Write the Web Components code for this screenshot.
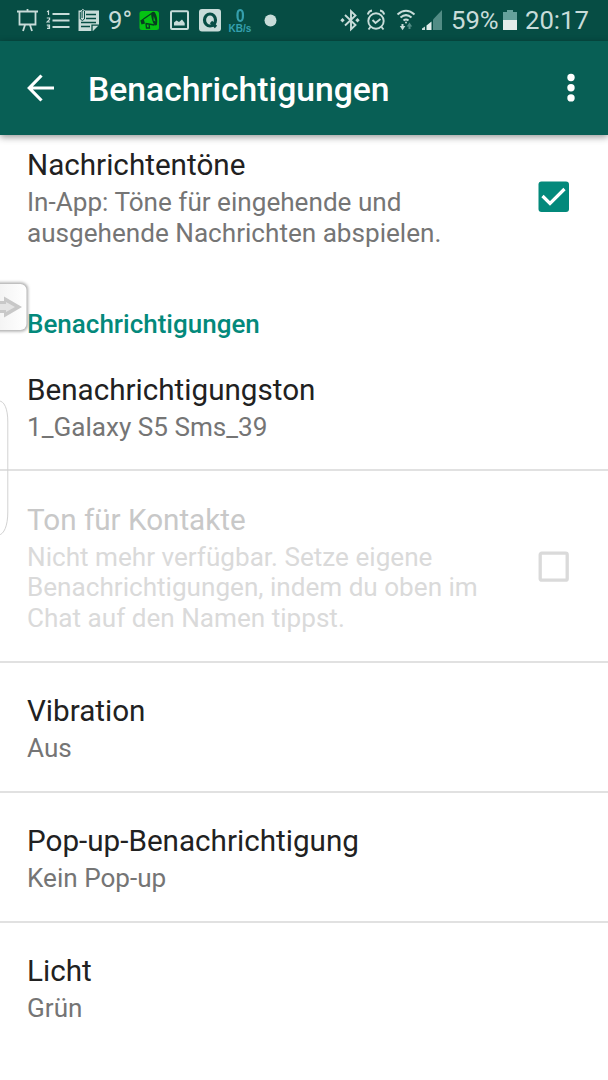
<!DOCTYPE html>
<html lang="de"><head><meta charset="utf-8"><title>Benachrichtigungen</title>
<style>html,body{margin:0;height:100%;overflow:hidden;background:#fff;font-family:Roboto,"Noto Sans",sans-serif}</style></head>
<body><settings-screen></settings-screen>
<script>
const define=(name,html)=>customElements.define(name,class extends HTMLElement{
  constructor(){super();this.attachShadow({mode:'open'}).innerHTML=html;}
});

define('status-bar',`<style>
:host{display:flex;justify-content:space-between;height:41px;background:#064d44;color:#c8dcd9;font-size:25.700px;line-height:43px}
div{display:flex;align-items:center}svg{display:block;flex:none}
span{white-space:nowrap}
.left{padding-left:16px}.right{padding-right:19px}
.rate{display:flex;flex-direction:column;justify-content:flex-start;align-items:center;width:26px;height:41px;margin-left:6px;color:#35a0ae}
.rate b{margin-top:6px;font:700 19px/19px "Liberation Sans",sans-serif;height:18px;transform:scaleX(.85)}
.rate span{font:700 10px/10px "Liberation Sans",sans-serif}
</style>
<div class="left">
<svg width="22" height="41" viewBox="16 0 22 41" fill="none" stroke="#c8dcd9" stroke-width="1.8"><path d="M17 11.500h21M19.500 12v12.500h16V12M27.500 9v3M25 25l-2 6M30 25l2 6"/></svg>
<svg style="margin-left:8px" width="24" height="41" viewBox="46 0 24 41" fill="none" stroke="#c8dcd9"><path stroke-width="2.200" d="M52.500 14h17M52.500 20.500h17M52.500 27h17"/><path stroke-width="1.200" d="M47 11.800l1.500-.8v4M46.800 18h2.800v1.500l-2.600 2.500h3M46.800 25.200h2.700v3.300h-2.500M47.500 26.800h2"/></svg>
<svg style="margin-left:8px" width="21" height="41" viewBox="78 0 21 41"><path fill="#c8dcd9" d="M78.500 10.500H99V25l-6 6H78.500z"/><path fill="none" stroke="#064d44" stroke-width="1.300" d="M86 14.500h10M86 18.500h10M81 22.500h15M81 26.500h9M92 31v-5.800h7"/><path fill="none" stroke="#064d44" stroke-width="1" d="M80.300 12v7q2 3 4.200 0v-8q-1.200-2-2.400 0v7"/><path fill="none" stroke="#c8dcd9" stroke-width="1" d="M81 11q1.500-3 3.500-.5"/></svg>
<span style="margin-left:9px;width:31px">9°</span>
<svg width="20" height="41" viewBox="139 0 20 41"><rect x="139.500" y="11" width="19.500" height="19" rx="2.500" fill="#05c313"/><path fill="#063d20" d="M151 13q2.500-2 4-.5 3 5 2 12-1 1.500-2.500.5-3-4-3.500-12z"/><path fill="none" stroke="#063d20" stroke-width="1.300" d="M151.500 13.500l-8 5.500M154.500 25l-9-1.500M146 24l.5 4h3l-.5-4"/><path fill="#063d20" d="M140.300 20.500l3.200-2 1.500 5-3.500 1z"/><path fill="#05c313" d="M153.700 16l1.800 5.500-2-1z"/></svg>
<svg style="margin-left:11px" width="19" height="41" viewBox="170 0 19 41"><rect x="171" y="11.300" width="17" height="17.800" rx="1" fill="none" stroke="#c8dcd9" stroke-width="2"/><path fill="#c8dcd9" d="M174 25.500v-3l2.500-2 2.500 1.500 3-2.500 2.700 3.500v2.500z"/></svg>
<svg style="margin-left:10px" width="22" height="41" viewBox="199 0 22 41"><rect x="199" y="9" width="22" height="22.500" rx="3" fill="#c8dcd9"/><g fill="none" stroke="#064d44" stroke-width="3.200"><ellipse cx="210" cy="20" rx="5.500" ry="6"/><path d="M211 22l5 5"/></g></svg>
<div class="rate"><b>0</b><span>KB/s</span></div>
<svg style="margin-left:11px" width="13" height="41"><circle cx="6.500" cy="20.500" r="6" fill="#c8dcd9"/></svg>
</div>
<div class="right">
<svg width="112" height="41" viewBox="338 0 112 41" fill="none" stroke="#c8dcd9" stroke-width="1.900"><path d="M345 15l10.500 10-4.500 4.200V11.300l4.500 4.200L345 25.500"/><path fill="#c8dcd9" stroke="none" d="M340.300 20.200l2.200-2.200 2.200 2.200-2.200 2.200zM355.300 20.200l2.200-2.200 2.200 2.200-2.200 2.200z"/><circle cx="376" cy="21" r="7.700"/><path d="M372.500 20l3 3 5-4M367.800 14.500q.8-3.500 4.200-4M384.200 14.500q-.8-3.500-4.200-4M370.500 27l-2 2.500M381.500 27l2 2.500"/>
<path stroke-width="2" d="M397.500 14.500q8.500-7.500 17 0M400.500 17.500q5.500-4.700 11 0M403.500 20.500q2.500-2 5 0"/><circle cx="406" cy="22.500" r="1" fill="#c8dcd9" stroke="none"/><path d="M402.500 24v3" stroke-width="2"/><path fill="#c8dcd9" stroke="none" d="M399.800 26h5.500l-2.700 4.300z"/><path stroke="#528c85" stroke-width="2" d="M409.500 25v4"/><path fill="#528c85" stroke="none" d="M406.700 26.500h5.500l-2.700-4z"/>
<path fill="#c8dcd9" stroke="none" d="M422 30v-1.500l3-2V30z"/><path fill="#e3eeec" stroke="none" d="M426.500 30v-4.500l5-4V30z"/><path fill="#528c85" stroke="none" d="M433 30V19.500L442 10v20z"/></svg>
<span style="margin-left:1px;width:46px">59%</span>
<svg style="margin-left:6px" width="14" height="41"><path fill="#67a29c" d="M0 12h4v-2h6v2h4v8H0z"/><path fill="#e5ebea" d="M0 20h14v10H0z"/></svg>
<span style="margin-left:8px;width:64px">20:17</span>
</div>`);

define('app-bar',`<style>
:host{display:flex;align-items:center;height:94px;background:#085f55;color:#fff;box-shadow:0 2px 7px rgba(0,0,0,.42);position:relative;z-index:2}
svg{display:block}.back{margin-left:27px}h1{margin:3px 0 0 34px;flex:1;font-size:33.700px;font-weight:500;line-height:40px}.more{margin-right:32px}
</style><svg class="back" width="27" height="28" viewBox="0 0 27 28" fill="none" stroke="#fff" stroke-width="3.200"><path d="M14.500 1.500L2.300 14l12.200 12.500M2.500 14H27"/></svg>
<h1><slot></slot></h1>
<svg class="more" width="10" height="30" viewBox="0 0 10 30" fill="#fff"><circle cx="5" cy="4.500" r="3.700"/><circle cx="5" cy="14.700" r="3.700"/><circle cx="5" cy="24.900" r="3.700"/></svg>`);

define('check-box',`<style>:host{display:block;width:31px;height:31px;margin:0 11px 2px 0}svg{display:block}.on{display:none}:host([checked]) .on{display:block}:host([checked]) .off{display:none}</style>
<svg class="on" width="31" height="31"><rect x=".5" y=".5" width="30.500" height="30.500" rx="3" fill="#03897b"/><path d="M4.500 15l7.500 7.500L26.500 8" fill="none" stroke="#fff" stroke-width="3.200"/></svg>
<svg class="off" width="31" height="31"><rect x="2.200" y="2.200" width="27" height="27" rx="1.500" fill="none" stroke="#dadada" stroke-width="3.300"/></svg>`);

define('setting-row',`<style>
:host{display:flex;align-items:center;box-sizing:border-box;padding:30.500px 28px 26.750px 27px;border-bottom:2px solid #e1e1e1;color:#212121}
:host([plain]){border-bottom:0}
.text{flex:1}.title{font-size:29.650px;line-height:36px;white-space:nowrap}.summary{margin-top:4px;font-size:26.120px;line-height:30.750px;color:#757575;white-space:pre-line}
:host([disabled]) .title{color:#c8c8c8}:host([disabled]) .summary{color:#dadada}
</style><div class="text"><div class="title"><slot name="title"></slot></div><div class="summary"><slot></slot></div></div><slot name="control"></slot>`);

define('section-title',`<style>:host{display:block;height:32px;padding:0 27px;color:#03897b;font-size:26px;font-weight:500;line-height:32px}</style><slot></slot>`);

define('edge-handle',`<style>:host{position:absolute;left:0;top:278px;z-index:3}svg{display:block}</style>
<svg width="34" height="60" viewBox="0 278 34 60"><defs><linearGradient id="g"><stop stop-color="#f0f0f0"/><stop offset="1" stop-color="#fff"/></linearGradient><filter id="b" x="-30%" y="-30%" width="160%" height="160%"><feGaussianBlur stdDeviation="1.500"/></filter></defs>
<rect x="-10" y="282.500" width="38" height="49" rx="7" fill="#aaa" filter="url(#b)"/><rect x="-10" y="284" width="36.500" height="46" rx="6" fill="url(#g)"/><path d="M-2 301H4v-4.500l18 10.500-18 10.500V313H-2z" fill="#c8c8c8"/><path d="M-2 304H6v-2l9 5-9 5v-2H-2z" fill="#e4e4e4"/></svg>`);
define('edge-outline',`<style>:host{position:absolute;left:0;top:398px;z-index:3}svg{display:block}</style><svg width="10" height="140" viewBox="0 398 10 140"><path d="M-1 401C4 401 7.800 408 7.800 422V512C7.800 526 4 534 -1 535" fill="none" stroke="#d2d2d2"/></svg>`);

define('settings-screen',`<style>:host{display:flex;flex-direction:column;position:relative;width:608px;height:1080px;overflow:hidden;background:#fff}
.first{padding-top:12px;padding-bottom:0}section-title{margin-top:59px}.tone{padding-top:32px}</style>
<status-bar></status-bar><app-bar>Benachrichtigungen</app-bar>
<setting-row class="first" plain><span slot="title">Nachrichtentöne</span>In-App: Töne für eingehende und<br>ausgehende Nachrichten abspielen.<check-box slot="control" checked></check-box></setting-row>
<section-title>Benachrichtigungen</section-title>
<setting-row class="tone"><span slot="title">Benachrichtigungston</span>1_Galaxy S5 Sms_39</setting-row>
<setting-row disabled><span slot="title">Ton für Kontakte</span>Nicht mehr verfügbar. Setze eigene<br>Benachrichtigungen, indem du oben im<br>Chat auf den Namen tippst.<check-box slot="control"></check-box></setting-row>
<setting-row><span slot="title">Vibration</span>Aus</setting-row>
<setting-row><span slot="title">Pop-up-Benachrichtigung</span>Kein Pop-up</setting-row>
<setting-row plain><span slot="title">Licht</span>Grün</setting-row>
<edge-handle></edge-handle><edge-outline></edge-outline>`);
</script></body></html>
